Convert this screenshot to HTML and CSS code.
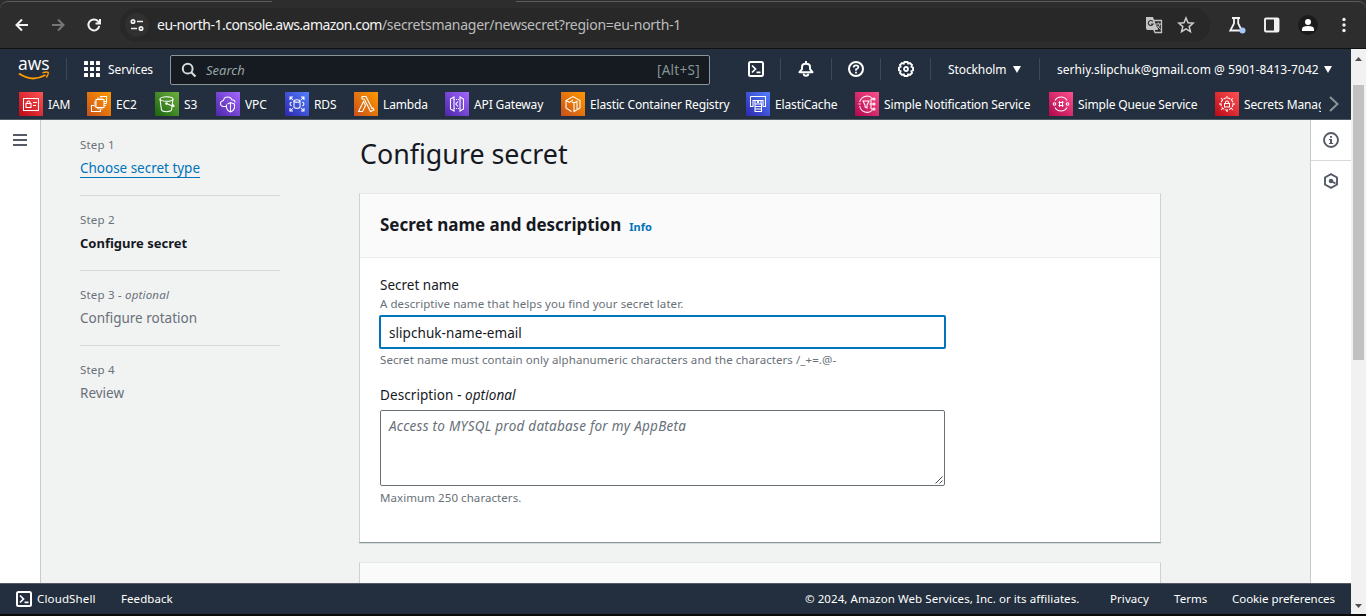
FILE: index.html
```html
<!DOCTYPE html>
<html lang="en"><head><meta charset="utf-8"><title>Configure secret</title><link rel="stylesheet" href="styles.css"></head>
<body>
<div class="browser">
  <div class="tabline"></div><div class="tabnotch"></div>
  <svg class="ico back" viewBox="0 0 16 16"><path d="M14 8H3M8 2.5L2.5 8L8 13.5" stroke="#f2f2f2" stroke-width="2" fill="none"/></svg>
  <svg class="ico fwd" viewBox="0 0 16 16"><path d="M2 8H13M8 2.5L13.5 8L8 13.5" stroke="#777" stroke-width="2" fill="none"/></svg>
  <svg class="ico reload" viewBox="0 0 16 16"><path d="M13.3 9A5.5 5.5 0 1 1 12 4.2L13.5 5.8M14 2V6.5H9.5" stroke="#f2f2f2" stroke-width="2" fill="none"/></svg>
  <div class="omni">
    <span class="site"><svg class="ico" viewBox="0 0 16 16"><g fill="none" stroke="#eee" stroke-width="1.7"><circle cx="4" cy="4.5" r="1.7"/><path d="M8 4.5h6M2 11.5h6"/><circle cx="12" cy="11.5" r="1.7"/></g></svg></span>
    <span class="url"><span class="host">eu-north-1.console.aws.amazon.com</span><span class="path">/secretsmanager/newsecret?region=eu-north-1</span></span>
    <svg class="trans" viewBox="0 0 18 18"><path d="M1 1h7l5 13H2.500Q1 14 1 12z" fill="#c4c4c4"/><path d="M9 4.500h7.500v12H10L8.500 13" fill="none" stroke="#c4c4c4" stroke-width="1.300"/><path d="M7.800 5.500a2.500 2.500 0 1 0 .3 2.500H6" stroke="#333" fill="none" stroke-width="1.200"/><path d="M11 8h5M13.300 6.500V8M15 8q-.8 3-3 5M12 9.500l3.500 4" stroke="#c4c4c4" fill="none"/></svg>
    <svg class="star" viewBox="0 0 18 18"><path d="M9 2l2 4.800 5.100.4-3.900 3.400 1.200 5L9 12.900l-4.400 2.700 1.200-5L1.900 7.200 7 6.800z" stroke="#cfcfcf" stroke-width="1.500" fill="none"/></svg>
  </div>
  <svg class="flask" viewBox="0 0 18 18"><path d="M4 2h8M6 2v5.500L2.300 14.500h11.500L10.200 7.500V2" stroke="#f2f2f2" stroke-width="1.800" fill="none"/><circle cx="14.500" cy="14.500" r="3" fill="#a8c7fa"/></svg>
  <svg class="panel" viewBox="0 0 16 16"><rect x="1" y="1.500" width="13.500" height="13" rx="1" fill="none" stroke="#f2f2f2" stroke-width="1.900"/><path d="M10 1h5v14h-5z" fill="#f2f2f2"/></svg>
  <span class="avatar"><svg class="face" viewBox="0 0 14 14"><circle cx="7" cy="4" r="3" fill="#fff"/><path d="M1 13v-2Q1 8 7 8t6 3v2z" fill="#fff"/></svg></span>
  <svg class="dots" viewBox="0 0 4 16"><g fill="#f2f2f2"><circle cx="2" cy="2.500" r="1.700"/><circle cx="2" cy="8" r="1.700"/><circle cx="2" cy="13.500" r="1.700"/></g></svg>
</div>
<div class="window"><div class="app">
<header class="nav">
  <div class="navtop">
    <div class="logo"><span class="aws">aws</span><svg class="smile" viewBox="0 0 32 10"><path d="M1 2.500Q14 11.500 27.500 4" stroke="#ff9900" stroke-width="2" fill="none"/><path d="M24.500 1.800Q29 .5 30 1.400T28.300 6.500" stroke="#ff9900" stroke-width="1.500" fill="none"/></svg></div>
    <i class="sep first"></i>
    <svg class="grid" viewBox="0 0 16 16"><g fill="#fff"><rect width="4" height="4" rx=".6"/><rect x="6" width="4" height="4" rx=".6"/><rect x="12" width="4" height="4" rx=".6"/><rect y="6" width="4" height="4" rx=".6"/><rect x="6" y="6" width="4" height="4" rx=".6"/><rect x="12" y="6" width="4" height="4" rx=".6"/><rect y="12" width="4" height="4" rx=".6"/><rect x="6" y="12" width="4" height="4" rx=".6"/><rect x="12" y="12" width="4" height="4" rx=".6"/></g></svg>
    <span class="services">Services</span>
    <div class="search"><svg class="ico" viewBox="0 0 16 16"><circle cx="6.700" cy="6.700" r="4.900" fill="none" stroke="#d5dbdb" stroke-width="2"/><path d="M10 10l4.500 4.500" stroke="#d5dbdb" stroke-width="2.200"/></svg><em class="ph">Search</em><span class="alt">[Alt+S]</span></div>
    <div class="tool shell"><svg class="ico" viewBox="0 0 16 16"><rect x="1" y="1" width="14" height="14" rx="1.500" fill="none" stroke="#fff" stroke-width="2"/><path d="M4 4.500l3.500 3.500L4 11.500M8.500 11.300h4" fill="none" stroke="#fff" stroke-width="1.700"/></svg></div>
    <i class="sep"></i>
    <div class="tool bell"><svg class="ico" viewBox="0 0 16 16"><path d="M1.500 11.200L4 8.200V6Q4 2.800 8 2.800T12 6v2.200l2.500 3z" fill="none" stroke="#fff" stroke-width="2" stroke-linejoin="round"/><path d="M8 0v3M5.700 12.500a2.300 2.300 0 0 0 4.600 0" fill="none" stroke="#fff" stroke-width="1.900"/></svg></div>
    <i class="sep"></i>
    <div class="tool help"><svg class="ico" viewBox="0 0 16 16"><circle cx="8" cy="8" r="7" fill="none" stroke="#fff" stroke-width="2"/><path d="M5.600 6.500Q5.600 4.300 8 4.300T10.400 6.300Q10.400 7.500 8 8.400V9.800" fill="none" stroke="#fff" stroke-width="1.700"/><path d="M7.100 10.700h1.800v1.700H7.100z" fill="#fff"/></svg></div>
    <i class="sep"></i>
    <div class="tool gear"><svg class="ico" viewBox="0 0 16 16"><path d="M6.500 1h3l.7 1.600 1.800-.6 2 2-.6 1.800 1.600.7v3l-1.600.7.6 1.800-2 2-1.800-.6L9.500 15h-3l-.7-1.600L4 14l-2-2 .6-1.800L1 9.500v-3l1.600-.7L2 4l2-2 1.800.6z" fill="none" stroke="#fff" stroke-width="1.900"/><circle cx="8" cy="8" r="2" fill="none" stroke="#fff" stroke-width="1.800"/></svg></div>
    <i class="sep"></i>
    <span class="region">Stockholm</span><svg class="tri" viewBox="0 0 8 7"><path d="M0 0h8L4 7z" fill="#fff"/></svg>
    <i class="sep last"></i>
    <span class="user">serhiy.slipchuk@gmail.com @ 5901-8413-7042</span><svg class="tri" viewBox="0 0 8 7"><path d="M0 0h8L4 7z" fill="#fff"/></svg>
  </div>
  <div class="favs"><div class="favlist">
    <a class="fav w68"><svg class="tile red" viewBox="0 0 24 24"><g><rect x="4.500" y="6.500" width="15" height="12"/><rect x="7" y="11.500" width="5" height="4"/><path d="M8 11.500v-1q0-1.500 1.500-1.500t1.500 1.500v1M14 10.500h4M14 13.500h3"/></g></svg>IAM</a>
    <a class="fav w68"><svg class="tile orange" viewBox="0 0 24 24"><g><rect x="9" y="7.500" width="8" height="8"/><path d="M11 7.500v-2M13 7.500v-2M15 7.500v-2M17 9.500h2M17 11.500h2M17 13.500h2M9 10H7M9 12H7M9 14H7M11 15.500v2M13 15.500v2M15 15.500v2M13 4.500h6.500v7M7 13.500H4.500v6h9v-2"/></g></svg>EC2</a>
    <a class="fav w61"><svg class="tile green" viewBox="0 0 24 24"><g><ellipse cx="11.500" cy="7" rx="6.500" ry="2.300"/><path d="M5 7l1.500 11q1 1.700 5 1.700t5-1.700L18 7M11.500 11.500l7 3M18.500 14.500q1.500-.2-.8-2.200"/><circle cx="11.500" cy="11.500" r=".8"/></g></svg>S3</a>
    <a class="fav w69"><svg class="tile purple" viewBox="0 0 24 24"><g><path d="M10 14.500H7Q4.500 14 4.500 11.500T7.500 8.500Q8 5 11.500 5T16 8q3-.5 3 2.500M11.500 12l3-1.500 4 1.500v4q-1 3-4 4-3-1-4-4v-3.500M14.500 10.500V20"/></g></svg>VPC</a>
    <a class="fav w69"><svg class="tile blue" viewBox="0 0 24 24"><g><ellipse cx="12" cy="9" rx="3" ry="1.300"/><path d="M9 9v6q0 1.300 3 1.300T15 15V9M5 8V5h3M5 5l3 3M16 5h3v3M19 5l-3 3M5 16v3h3M5 19l3-3M16 19h3v-3M19 19l-3-3M6.500 10q-3 2 0 4M17.500 10q3 2 0 4"/></g></svg>RDS</a>
    <a class="fav w91"><svg class="tile orange" viewBox="0 0 24 24"><g><path d="M8 4.500h4l6 12 1-.5 1 2-3.500 1.500L11 8.500l-1-1.500H8zM9.500 9.500L4.500 19.500h4L11.500 13.500z"/></g></svg>Lambda</a>
    <a class="fav w116"><svg class="tile purple" viewBox="0 0 24 24"><g><path d="M9 5L5.500 7v10L9 19V5zM15 5l3.500 2v10L15 19V5zM13 9.500L10.800 12l2.200 2.500"/><path d="M9 7.500h6M9 16.500h6" stroke-dasharray="1 1"/></g></svg>API Gateway</a>
    <a class="fav w185"><svg class="tile orange" viewBox="0 0 24 24"><g><path d="M10.500 19.500L5 16V8.500L12 4.500l7 4v7.500L13 19.500v-8.500l3.500-2M5 8.500l3.500 2 3.500-2.500M16 10v7M13 11l-2-1"/></g></svg>Elastic Container Registry</a>
    <a class="fav w109"><svg class="tile blue" viewBox="0 0 24 24"><g><path d="M4.500 4.500h15v10H17V8.500h-2V12M4.500 4.500v10H7V8.500h2V12M9.500 8.500h2V11M12.500 11V8.500H15"/><path d="M9 12h6.500v7.500H9zM9 14.500h6.500M9 17h6.500"/></g></svg>ElastiCache</a>
    <a class="fav w194"><svg class="tile pink" viewBox="0 0 24 24"><g><path d="M17.500 6.500A7.500 7.500 0 0 0 4.700 10M17.500 18A7.500 7.500 0 0 1 4.700 14M3.500 12h2M8 9h6l-2 4v3l-2-1v-2zM14.500 12H18M16 7v10M16 7h2M16 17h2"/><circle cx="19" cy="7" r="1"/><circle cx="19" cy="12" r="1"/><circle cx="19" cy="17" r="1"/></g></svg>Simple Notification Service</a>
    <a class="fav w166"><svg class="tile pink" viewBox="0 0 24 24"><g><path d="M6 8.500q2-3.500 6-3.500t6 3.500M6 15.500q2 3.500 6 3.500t6-3.500M9.500 10.500h5M9.500 13.500h5M10.500 9v6M13.500 9v6"/><circle cx="5.500" cy="12" r="1.300"/><circle cx="18.500" cy="12" r="1.300"/></g></svg>Simple Queue Service</a>
    <a class="fav"><svg class="tile red" viewBox="0 0 24 24"><g><circle cx="12" cy="12" r="6" stroke-dasharray="3 1"/><path d="M9.500 11.500h5V15h-5zM10.500 11.500v-1q0-1.500 1.500-1.500t1.500 1.500v1M12 4v2M12 18v2M4 12h2M18 12h2M6 6l2 2M18 6l-2 2M6 18l2-2M18 18l-2-2"/></g></svg>Secrets Manager</a>
  </div><svg class="more" viewBox="0 0 10 16"><path d="M1 1l7.500 7L1 15" fill="none" stroke="#879596" stroke-width="2"/></svg></div>
</header>
<div class="body">
  <aside class="left"><svg class="burger" viewBox="0 0 14 12"><path d="M0 1h14M0 6h14M0 11h14" stroke="#545b64" stroke-width="2"/></svg></aside>
  <main class="main">
    <ol class="steps">
      <li class="step"><div class="num">Step 1</div><div><a class="name link">Choose secret type</a></div></li>
      <li class="step"><div class="num">Step 2</div><div class="name cur">Configure secret</div></li>
      <li class="step"><div class="num">Step 3 <em>- optional</em></div><div class="name">Configure rotation</div></li>
      <li class="step"><div class="num">Step 4</div><div class="name">Review</div></li>
    </ol>
    <div class="content">
      <h1 class="title">Configure secret</h1>
      <section class="card">
        <div class="cardhead"><h2 class="h2">Secret name and description</h2><a class="info">Info</a></div>
        <div class="form">
          <div class="label">Secret name</div>
          <div class="hint">A descriptive name that helps you find your secret later.</div>
          <div class="input">slipchuk-name-email</div>
          <div class="hint">Secret name must contain only alphanumeric characters and the characters /_+=.@-</div>
          <div class="label desc">Description <em>- optional</em></div>
          <div class="area"><em>Access to MYSQL prod database for my AppBeta</em><svg class="grip" viewBox="0 0 8 8"><path d="M.5 7.500l7-7M4.500 7.500l3-3" stroke="#333" stroke-width=".9"/></svg></div>
          <div class="hint">Maximum 250 characters.</div>
        </div>
      </section>
      <section class="card next"></section>
    </div>
  </main>
  <aside class="right">
    <div class="cell"><svg class="ico" viewBox="0 0 16 16"><circle cx="8" cy="8" r="7" fill="none" stroke="#545b64" stroke-width="1.900"/><path d="M7 4h2v1.800H7zM6 7h3v4h1.200v1H6v-1h1V8H6z" fill="#545b64"/></svg></div>
    <div class="cell"><svg class="ico" viewBox="0 0 16 16"><path d="M8 1.200l6 3.300v7L8 14.800l-6-3.300v-7z" fill="none" stroke="#545b64" stroke-width="1.900"/><circle cx="8" cy="8" r="2.300" fill="#545b64"/><path d="M8 8l4.500 2.500" stroke="#545b64" stroke-width="2"/></svg></div>
  </aside>
</div>
<footer class="foot">
  <svg class="ico" viewBox="0 0 16 16"><rect x="1" y="1" width="14" height="14" rx="1.500" fill="none" stroke="#fff" stroke-width="2"/><path d="M4 4.500l3.500 3.500L4 11.500M8.500 11.300h4" fill="none" stroke="#fff" stroke-width="1.700"/></svg>
  <span class="cs">CloudShell</span><span class="fb">Feedback</span><span class="copy">© 2024, Amazon Web Services, Inc. or its affiliates.</span><span class="pr">Privacy</span><span class="te">Terms</span><span class="co">Cookie preferences</span>
</footer>
</div>
<div class="scroll"><svg class="arr" viewBox="0 0 7 4"><path d="M0 4h7L3.500 0z" fill="#505050"/></svg><div class="thumb"></div><svg class="arr down" viewBox="0 0 7 4"><path d="M0 0h7L3.500 4z" fill="#505050"/></svg></div>
</div>
</body></html>
```
FILE: styles.css
```css
*{box-sizing:border-box}
body{margin:0;width:1366px;height:616px;overflow:hidden;background:#0c0a0a;font-family:"Noto Sans",sans-serif;font-size:13.5px;color:#16191f}
svg{display:block;flex:none}
.ico{width:16px;height:16px}
.browser{height:49px;background:#2d2d2d;border-bottom:1px solid #111;display:flex;align-items:center;position:relative;padding:2px 0 0 14px}
.tabline{position:absolute;left:0;right:0;top:1px;height:12px;border-top:1px solid #5c5c5c;border-radius:8px 8px 0 0}
.tabnotch{position:absolute;left:272px;width:244px;top:0;height:2px;background:#2d2d2d}
.fwd{margin-left:20px}
.reload{margin-left:20px}
.omni{margin-left:18px;width:1090px;height:34px;border-radius:17px;background:#282828;display:flex;align-items:center;padding-left:5px}
.site{width:24px;height:24px;border-radius:12px;background:#303030;display:flex;align-items:center;justify-content:center}
.url{font-size:14px;margin-left:8px;padding-bottom:2px;flex:1;white-space:nowrap;color:#bdbdbd;letter-spacing:-.27px}
.host{color:#f4f4f4;letter-spacing:-.52px}
.trans{width:18px;height:18px}
.star{width:18px;height:18px;margin:0 15px 0 14px}
.flask{width:18px;height:18px;margin-left:18px}
.panel{width:16px;height:16px;margin-left:18px}
.avatar{width:20px;height:20px;border-radius:10px;background:#1b1b1b;margin-left:18px;display:flex;align-items:center;justify-content:center}
.face{width:14px;height:14px}
.dots{width:4px;height:16px;margin-left:24px}
.window{display:flex;height:565px}
.app{width:1351px;display:flex;flex-direction:column}
.nav{height:71px;background:#232f3e;border-bottom:1px solid #545b64;color:#fff}
.navtop{height:40px;display:flex;align-items:center;white-space:nowrap;font-size:12px}
.logo{width:32px;margin-left:18px;height:24px;display:flex;flex-direction:column}
.aws{font-family:"Open Sans",sans-serif;font-weight:500;font-size:17.5px;line-height:12px;height:14px;width:30px;text-align:center}
.smile{width:32px;height:10px}
.sep{width:1px;height:22px;background:#414750;flex:none}
.first{margin-left:16px}
.grid{width:16px;height:16px;margin-left:17px}
.services{margin-left:8px;width:62px;letter-spacing:-.1px}
.search{width:540px;height:30px;margin-top:1px;border:1px solid #879596;border-radius:2px;background:#161a21;display:flex;align-items:center;padding:0 9px 0 10px;flex:none}
.ph{margin-left:9px;font-size:13px;color:#95a5a6;flex:1}
.alt{color:#879596;font-size:13.5px;letter-spacing:.3px}
.tool{flex:none}
.shell{margin-left:38px;margin-right:16px;width:16px}
.bell{margin-left:17px;margin-right:17px}
.help{margin-left:16px;margin-right:16px}
.gear{margin-left:17px;margin-right:16px}
.region{margin-left:17px;width:65px;letter-spacing:-.1px}
.tri{width:8px;height:7px}
.last{margin-left:18px}
.user{margin-left:17px;width:267px;letter-spacing:.04px}
.favs{height:30px;display:flex;align-items:center;padding-left:19px}
.favlist{width:1302px;overflow:hidden;display:flex;white-space:nowrap;font-size:12px;letter-spacing:-.14px}
.fav{display:flex;align-items:center;gap:5px;flex:none}
.w68{width:68px}.w61{width:61px}.w69{width:69px}.w91{width:91px}.w116{width:116px}.w185{width:185px}.w109{width:109px}.w194{width:194px}.w166{width:166px}
.tile{width:24px;height:24px}
.tile g{fill:none;stroke:#fff;stroke-width:1.05}
.red{background:linear-gradient(45deg,#bd0816,#ff5252)}
.orange{background:linear-gradient(45deg,#c8511b,#f90)}
.green{background:linear-gradient(45deg,#1b660f,#6cae3e)}
.purple{background:linear-gradient(45deg,#4d27a8,#a166ff)}
.blue{background:linear-gradient(45deg,#2e27ad,#527fff)}
.pink{background:linear-gradient(45deg,#b0084d,#ff4f8b)}
.more{width:10px;height:16px;margin-left:8px}
.body{height:463px;display:flex;overflow:hidden}
.left{width:41px;background:#fff;border-right:1px solid #c5cbcb;padding:14px 0 0 13px}
.burger{width:14px;height:12px}
.main{flex:1;background:#f1f3f3;display:flex;padding-left:39px}
.steps{list-style:none;margin:0;padding:0;width:200px;color:#687078}
.step{height:75px;padding-top:15px;border-bottom:1px solid #d5dbdb}
.step:first-child{height:76px;padding-top:16px}
.step:last-child{border:0}
.num{font-size:11.5px;line-height:18px;letter-spacing:.2px}
.name{font-size:13.5px;line-height:18px;margin-top:5px}
.link{display:inline-block;color:#0073bb;border-bottom:1px solid #0073bb;line-height:17px;margin-top:6px;letter-spacing:-.02px}
.cur{font-weight:700;color:#16191f;font-size:13px}
.content{margin-left:79px;width:802px}
.title{margin:0;padding-left:1px;font-weight:400;font-size:26.800px;line-height:34px;padding-top:17px}
.card{margin-top:22px;height:350px;background:#fff;border:1px solid #ccd1d1;border-top-color:#e5e9e9;border-bottom-color:#879596;box-shadow:0 1px 0 #d5dbdb;width:802px}
.cardhead{height:64px;background:#fafafa;border-bottom:1px solid #eaeded;padding:0 20px;display:flex;align-items:baseline;padding-top:19px}
.h2{margin:0;font-size:17px;line-height:24px;font-weight:700;letter-spacing:-.03px}
.info{font-size:11px;font-weight:700;color:#0073bb;margin-left:8px}
.form{padding:17px 20px}
.label{line-height:20px}
.hint{font-size:11.5px;line-height:16px;color:#687078;letter-spacing:.07px;padding-top:1px;height:17px}
.input{width:567px;height:34px;margin:3px 0 2px -1px;border:2px solid #0073bb;border-radius:2px;padding:0 8px;line-height:32px;letter-spacing:.06px}
.desc{margin-top:17px;letter-spacing:.08px}
.area{width:565px;height:76px;margin:5px 0 3px;border:1px solid #687078;border-radius:2px;padding:5px 8px;line-height:20px;color:#687078;position:relative;letter-spacing:.26px}
.grip{position:absolute;right:1px;bottom:1px;width:8px;height:8px}
.next{margin-top:19px;background:#fafafa}
.right{width:41px;background:#fff;border-left:1px solid #c5cbcb}
.cell{height:41px;border-bottom:1px solid #d5dbdb;display:flex;align-items:center;justify-content:center}
.cell+.cell{height:40px;border:0}
.foot{height:31px;background:#232f3e;border-top:1px solid #545b64;color:#fff;display:flex;align-items:center;padding:0 0 1px 16px;font-size:11.5px;white-space:nowrap;letter-spacing:.07px}
.cs{margin-left:5px;width:84px;letter-spacing:.15px}
.fb{width:684px}
.copy{width:305px}
.pr{width:64px}
.te{width:58px}
.co{letter-spacing:-.05px}
.scroll{width:15px;background:#f1f1f1;padding-top:8px;display:flex;flex-direction:column;align-items:center}
.arr{width:7px;height:4px}
.thumb{width:11px;height:275px;margin-top:24px;background:#c1c1c1}
.down{margin-top:auto;margin-bottom:6px}
```
